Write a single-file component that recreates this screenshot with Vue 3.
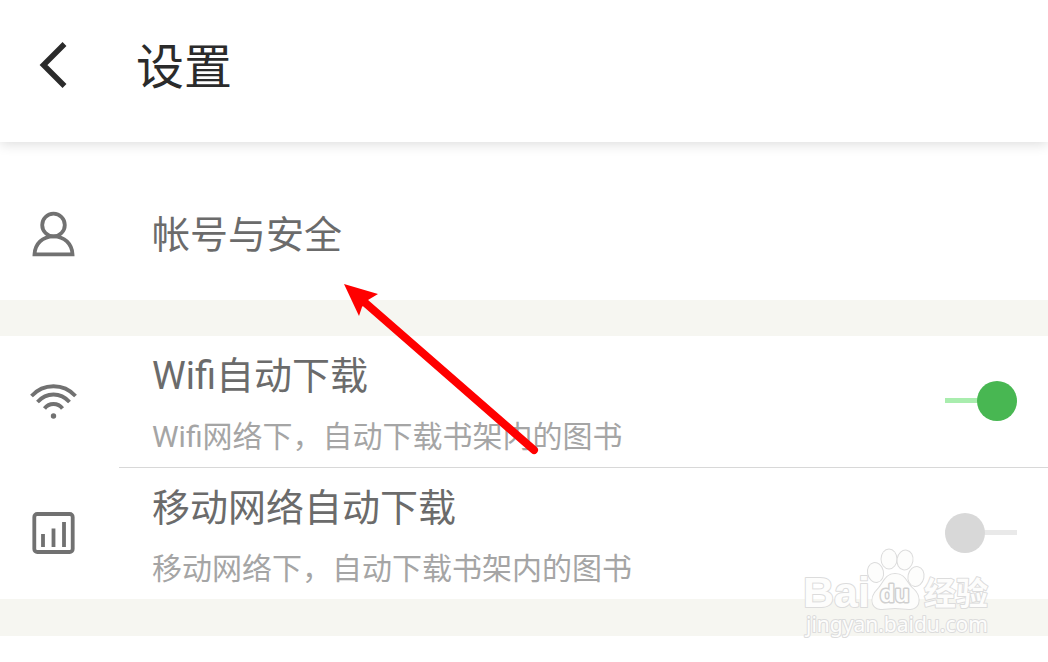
<script setup>
import { ref } from "vue";

const downloads = ref([
  {
    id: "wifi",
    title: "Wifi自动下载",
    note: "Wifi网络下，自动下载书架内的图书",
    enabled: true,
  },
  {
    id: "mobile",
    title: "移动网络自动下载",
    note: "移动网络下，自动下载书架内的图书",
    enabled: false,
  },
]);
</script>

<template>
  <div class="page">
    <header class="header">
      <button class="back" type="button" aria-label="返回">
        <svg width="32" height="48" viewBox="0 0 32 48" aria-hidden="true">
          <path d="M28.5 3 L7.5 24 L28.5 45" />
        </svg>
      </button>
      <h1 class="title">设置</h1>
    </header>

    <main>
      <button class="account" type="button">
        <svg class="icon" viewBox="0 0 48 48" aria-hidden="true">
          <circle cx="23.5" cy="14" r="11.3" />
          <path d="M4.5 43.3 C5 33 12.5 25.3 23.5 25.3 C34.5 25.3 42 33 42.5 43.3 Z" />
        </svg>
        <span class="name">帐号与安全</span>
      </button>

      <section class="group">
        <div v-for="item in downloads" :key="item.id" class="row">
          <svg v-if="item.id === 'wifi'" class="icon" viewBox="0 0 48 48" aria-hidden="true">
            <path d="M1.5 18 C13.5 5 33.5 5 45.5 18" />
            <path d="M7.5 24 C16.5 14 30.5 14 39.5 24" />
            <path d="M14.5 30.5 C19 24.5 28 24.5 32.5 30.5" />
            <circle class="dot" cx="23.5" cy="38" r="2.7" />
          </svg>
          <svg v-else class="icon" viewBox="0 0 48 48" aria-hidden="true">
            <rect x="4.3" y="4" width="38.4" height="38" rx="3" />
            <path d="M13 24 V37 M23.5 18.5 V37 M34 12 V37" />
          </svg>
          <div class="content">
            <label class="texts" :for="item.id">
              <span class="name">{{ item.title }}</span>
              <span class="note">{{ item.note }}</span>
            </label>
            <input :id="item.id" v-model="item.enabled" class="switch" type="checkbox" role="switch" />
          </div>
        </div>
      </section>
    </main>

    <svg class="pointer" width="200" height="176" viewBox="0 0 200 176" aria-hidden="true">
      <path class="shaft" d="M22 20 L194 170" />
      <path class="head" d="M4 4 L38 14 L28 20 L22 27 L19 36 Z" />
    </svg>

    <svg class="watermark" width="200" height="104" viewBox="0 0 200 104" aria-hidden="true">
      <g class="mark">
        <ellipse cx="74.5" cy="32.5" rx="7.5" ry="9.5" transform="rotate(-12 74.5 32.5)" />
        <ellipse cx="88" cy="19" rx="7.5" ry="9.5" />
        <ellipse cx="104" cy="20" rx="7.5" ry="9.5" transform="rotate(10 104 20)" />
        <ellipse cx="115" cy="36.5" rx="7.5" ry="9.5" transform="rotate(12 115 36.5)" />
        <path d="M94 34 C85 34 83 42 78 48 C73 53 70 58 72 64 C76 72 85 68 94 68 C104 68 113 72 117 64 C119 57 116 52 111 48 C105 42 104 34 94 34 Z" />
        <text class="brand" x="2" y="67">Bai</text>
        <text class="small" x="79" y="62">du</text>
        <text class="cjk" x="123" y="65">经验</text>
        <text class="url" x="5" y="92">jingyan.baidu.com</text>
      </g>
    </svg>
  </div>
</template>

<style>
body {
  margin: 0;
  background: #fff;
}
</style>

<style scoped>
.page {
  position: relative;
  min-height: 100vh;
  overflow: hidden;
  background: #fff;
  font-family: Roboto, "Noto Sans CJK SC", sans-serif;
}

.header {
  display: flex;
  align-items: center;
  height: 142px;
  padding: 0 36px 12px;
  box-sizing: border-box;
  background: #fff;
  box-shadow: 0 2px 12px rgba(0, 0, 0, 0.14);
}

.back {
  display: flex;
  margin: 0 68px 0 0;
  padding: 0;
  border: 0;
  background: none;
  cursor: pointer;
}

.back path {
  fill: none;
  stroke: #2b2b2b;
  stroke-width: 5.5;
}

.title {
  margin: 0;
  padding-top: 6px;
  color: #2b2b2b;
  font-size: 48px;
  font-weight: 400;
  line-height: 64px;
}

.account {
  display: flex;
  align-items: center;
  width: 100%;
  height: 158px;
  padding: 28px 30px 0;
  border: 0;
  background: none;
  font-family: inherit;
  text-align: left;
  cursor: pointer;
}

.icon {
  flex: none;
  width: 48px;
  height: 48px;
  fill: none;
  stroke: #717171;
  stroke-width: 3.8;
}

.icon .dot {
  fill: #717171;
  stroke: none;
}

.name {
  color: #6b6b6b;
  font-size: 38px;
  line-height: 50px;
}

.account .name {
  margin-left: 74px;
}

.group {
  border-top: 36px solid #f6f6f1;
  border-bottom: 37px solid #f6f6f1;
}

.row {
  display: flex;
  align-items: center;
  padding-left: 30px;
}

.content {
  display: flex;
  flex: 1;
  align-items: center;
  justify-content: space-between;
  height: 131px;
  margin-left: 41px;
  padding: 0 31px 0 33px;
}

.row:not(:last-child) .content {
  border-bottom: 1px solid #d8d8d8;
}

.texts {
  display: flex;
  flex-direction: column;
  gap: 16px;
  padding-top: 4px;
}

.note {
  color: #a5a5a5;
  font-size: 30px;
  line-height: 40px;
}

.switch {
  display: flex;
  align-items: center;
  width: 72px;
  height: 40px;
  margin: 0 0 2px;
  appearance: none;
  border-radius: 3px;
  background: linear-gradient(#e9e9e9, #e9e9e9) center / 100% 5px no-repeat;
  cursor: pointer;
}

.switch::before {
  content: "";
  width: 40px;
  height: 40px;
  border-radius: 50%;
  background: #d8d8d8;
}

.switch:checked {
  justify-content: flex-end;
  background-image: linear-gradient(#a9edae, #a9edae);
}

.switch:checked::before {
  background: #48b752;
}

.pointer {
  position: absolute;
  top: 280px;
  left: 340px;
  pointer-events: none;
}

.shaft {
  stroke: #f00;
  stroke-width: 8;
  stroke-linecap: round;
}

.head {
  fill: #f00;
}

.watermark {
  position: absolute;
  top: 540px;
  left: 801px;
  pointer-events: none;
}

.mark {
  fill: #fdfdfc;
  stroke: #dcdcdc;
  stroke-width: 2;
  stroke-linejoin: round;
  paint-order: stroke;
}

.brand {
  font: bold 43px "Liberation Sans", sans-serif;
}

.small {
  font: bold 24px "Liberation Sans", sans-serif;
  stroke: #d0d0d0;
  stroke-width: 3;
}

.cjk {
  font: bold 32px "Noto Sans CJK SC", sans-serif;
}

.url {
  font: 21px "Noto Sans", sans-serif;
}
</style>
